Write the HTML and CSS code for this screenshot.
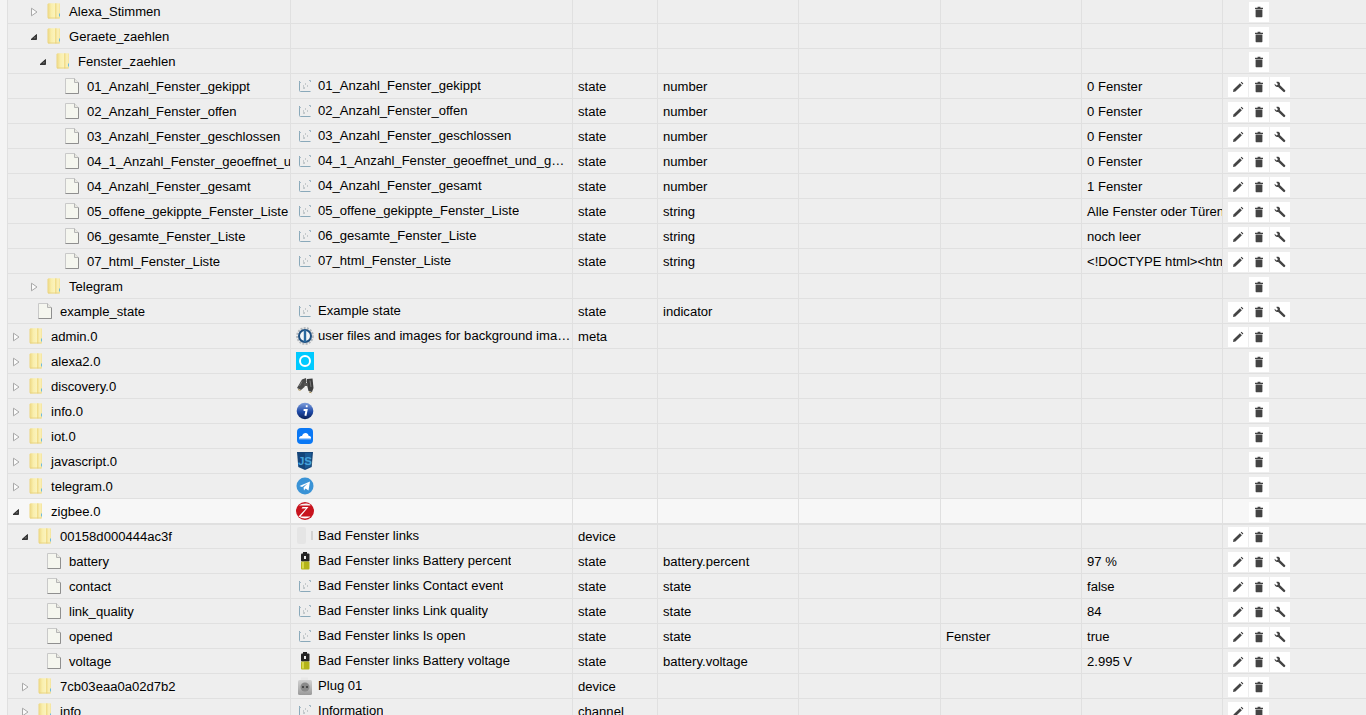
FILE: index.html
```html
<!DOCTYPE html>
<html lang="de">
<head>
<meta charset="utf-8">
<title>Objekte</title>
<link rel="stylesheet" href="styles.css">
</head>
<body>
<svg class="defs" aria-hidden="true">
<defs>
<linearGradient id="fg" x1="0" y1="0" x2="1" y2="0"><stop offset="0" stop-color="#ecd57e"/><stop offset=".5" stop-color="#f9eeac"/><stop offset="1" stop-color="#fbf3bd"/></linearGradient>
<linearGradient id="fh" x1="0" y1="0" x2="1" y2="0"><stop offset="0" stop-color="#efd981"/><stop offset=".6" stop-color="#fbf2bd"/><stop offset="1" stop-color="#f4e39a"/></linearGradient>
<linearGradient id="ig" x1="0" y1="0" x2="0" y2="1"><stop offset="0" stop-color="#7f9fdc"/><stop offset=".55" stop-color="#1f4aa8"/><stop offset="1" stop-color="#0b1f55"/></linearGradient>
<linearGradient id="pg" x1="0" y1="0" x2="0" y2="1"><stop offset="0" stop-color="#d2d2d2"/><stop offset="1" stop-color="#9a9a9a"/></linearGradient>
<symbol id="open" viewBox="0 0 8 10"><path d="M1.500 1.200 7 5 1.500 8.800Z" fill="#fbfbfb" stroke="#a8a8a8"/></symbol>
<symbol id="shut" viewBox="0 0 8 10"><path d="M1 7.500 6.500 2.500V7.500Z" fill="#222" stroke="#222" stroke-width=".8"/><path d="M3.200 6.400 5.600 4.300V6.400Z" fill="#777"/></symbol>
<symbol id="folder" viewBox="0 0 14 16"><path d="M.5 1.500C.5.800 1.500.300 3 .300H8V15.500H2.500C1.200 15.500.5 15 .5 14.200Z" fill="url(#fg)"/><path d="M8 .300H12.300C12.800 .300 13 .600 13 1V14.500C13 15.200 12.500 15.500 11.800 15.500H8Z" fill="url(#fh)"/><path d="M1 15H12.500" stroke="#e6ce78" stroke-width=".8"/><path d="M12 10.500h1v3h-1Z" fill="#6fbbdc"/></symbol>
<symbol id="file" viewBox="0 0 14 16"><path d="M.5.500H9.500L13.500 4.500V15.500H.5Z" fill="#f5f6ef" stroke="#c9c9c9"/><path d="M13.500 4.500V15.500H.5" fill="none" stroke="#8f8f8f"/><path d="M9.500.500V4.500H13.500" fill="#e8e8e0" stroke="#b5b5b5"/></symbol>
<symbol id="state" viewBox="0 0 12 12"><path d="M.5 1V10.500Q.5 11.500 1.500 11.500H11.500" fill="none" stroke="#8aa9ba"/><path d="M10 .500H11.500V2" fill="none" stroke="#9db5c2"/><path d="M.5 2.500h1.500" stroke="#a9bdc8"/><path d="M4 6h1M4 8h2M6 4h1M8 6h1" stroke="#9aa5aa"/></symbol>
<symbol id="pen" viewBox="0 0 12 12"><path d="M1 11 1.500 8.600 7.900 2.200 9.900 4.200 3.400 10.500Z" fill="#444"/><path d="M8.700 1.400 9.500.800 11.300 2.600 10.700 3.400Z" fill="#3b3b3b"/></symbol>
<symbol id="bin" viewBox="0 0 12 12"><path d="M2 1.800H4.600V.800H7.400V1.800H10V2.900H2Z" fill="#444"/><path d="M2.600 3.600H9.400V10.600Q9.400 11.200 8.800 11.200H3.200Q2.600 11.200 2.600 10.600Z" fill="#444"/></symbol>
<symbol id="wrench" viewBox="0 0 12 12"><path d="M.6 2.800 2.600 4.600 4 3.200 2.200 1.100C3.600.2 5.700.8 6 2.600 6.100 3.200 6 3.700 5.800 4.100L11.200 9.300C11.800 10 10.400 11.600 9.600 11L4.200 5.900C2.400 6.500.3 5 .6 2.800Z" fill="#444"/></symbol>
<symbol id="admin" viewBox="0 0 18 18"><circle cx="9" cy="9" r="7.800" fill="none" stroke="#b4b8bc" stroke-width="2.200" stroke-dasharray="2 1.200"/><circle cx="9" cy="9" r="6" fill="#f3f6f8" stroke="#1d4f80" stroke-width="2"/><path d="M9 3V15" stroke="#2a6aa0" stroke-width="2.400"/></symbol>
<symbol id="alexa" viewBox="0 0 18 18"><rect width="18" height="18" fill="#00caff"/><circle cx="9" cy="9" r="5" fill="none" stroke="#fff" stroke-width="2"/></symbol>
<symbol id="bino" viewBox="0 0 18 18"><path d="M1 11 6 2.500 10 1 10.500 4.500 8.500 10 5 13Z" fill="#4a4a4a"/><path d="M11 2 16.500 1.500 17.500 11 16 15 12.500 14 11 8Z" fill="#3e3e3e"/><path d="M8 6h4v3H8Z" fill="#555"/><path d="M2 12.500 4.500 13.500M13 15 15.500 15.800" stroke="#a88f55"/><path d="M6 4.500 3.500 9M14 3.500 15 10" stroke="#7a7a7a"/></symbol>
<symbol id="info" viewBox="0 0 18 18"><circle cx="9" cy="9" r="8.300" fill="url(#ig)"/><path d="M9.800 4.200h1.800M7.600 7.900h3l-1.200 5.800" stroke="#fff" stroke-width="2" fill="none"/></symbol>
<symbol id="iot" viewBox="0 0 18 18"><rect x="1" y="1" width="16" height="16" rx="4" fill="#0a78f5"/><path d="M3 11.500C3 9.500 4.800 9 6 9 6.500 7 8 6 9.500 6 11.500 6 12.500 7.500 12.500 8.800 14 8.800 15.500 10 15 11.500Z" fill="#fff"/><path d="M3 11.500h12v.8H3Z" fill="#bfdcff"/></symbol>
<symbol id="js" viewBox="0 0 18 18"><path d="M1 0H17L15.700 15 9 18 2.300 15Z" fill="#14457a"/><path d="M9 1V16.500L14.500 14.500 15.500 1Z" fill="#1c5a94"/><text x="9" y="13" text-anchor="middle" font-family="Liberation Sans, sans-serif" font-weight="700" font-size="11.500" fill="#45a3dc">JS</text></symbol>
<symbol id="tg" viewBox="0 0 18 18"><circle cx="9" cy="9" r="8.500" fill="#3a93d6"/><path d="M3.500 9 14 4.500 12.500 13.500 9.500 11.500 8 13.500 7.500 10.500 11.500 6.500 6 10Z" fill="#fff"/></symbol>
<symbol id="zig" viewBox="0 0 18 18"><circle cx="9" cy="9" r="9" fill="#c8141e"/><path d="M3 3.500C5 1.500 11 .800 14 2.500L14.500 3.500H5.500Z" fill="#f4f4f4"/><path d="M12.500 5 4.500 14.500H14.500C13 16.500 7 17.500 2.500 14.500L10 6.500H5.500L6.500 5Z" fill="#fff"/></symbol>
<symbol id="win" viewBox="0 0 18 18"><rect x="1" y="0" width="9" height="17" rx="2" fill="#e5e5e5"/><rect x="15" y="4" width="2" height="9" fill="#d2d2d2"/></symbol>
<symbol id="bat" viewBox="0 0 18 18"><rect x="7" y="0" width="4" height="2" fill="#222"/><rect x="5" y="1.500" width="8.500" height="8" rx="1" fill="#222"/><rect x="5" y="9.500" width="8.500" height="8" rx="1" fill="#b4b419"/><rect x="6" y="10" width="2" height="6.500" fill="#d8d84a"/><rect x="8" y="4" width="2" height="3" fill="#eee"/></symbol>
<symbol id="plug" viewBox="0 0 18 18"><path d="M5 .500H12V4H5Z" fill="#e8e8e8"/><rect x="2" y="3" width="14" height="15" rx="1.500" fill="url(#pg)"/><circle cx="9" cy="10" r="4.500" fill="#8a8a8a"/><circle cx="7" cy="10" r="1" fill="#333"/><circle cx="11" cy="10" r="1" fill="#333"/></symbol>
</defs>
</svg>
<main class="tree">
<div class="row"><div class="cell name d2"><svg class="tg"><use href="#open"/></svg><svg class="ic"><use href="#folder"/></svg><span>Alexa_Stimmen</span></div><div class="cell"></div><div class="cell"></div><div class="cell"></div><div class="cell"></div><div class="cell"></div><div class="cell"></div><div class="acts"><i class="btn gap"></i><b class="btn"><svg><use href="#bin"/></svg></b></div></div>
<div class="row"><div class="cell name d2"><svg class="tg"><use href="#shut"/></svg><svg class="ic"><use href="#folder"/></svg><span>Geraete_zaehlen</span></div><div class="cell"></div><div class="cell"></div><div class="cell"></div><div class="cell"></div><div class="cell"></div><div class="cell"></div><div class="acts"><i class="btn gap"></i><b class="btn"><svg><use href="#bin"/></svg></b></div></div>
<div class="row"><div class="cell name d3"><svg class="tg"><use href="#shut"/></svg><svg class="ic"><use href="#folder"/></svg><span>Fenster_zaehlen</span></div><div class="cell"></div><div class="cell"></div><div class="cell"></div><div class="cell"></div><div class="cell"></div><div class="cell"></div><div class="acts"><i class="btn gap"></i><b class="btn"><svg><use href="#bin"/></svg></b></div></div>
<div class="row"><div class="cell name d4"><i class="tg"></i><svg class="ic"><use href="#file"/></svg><span>01_Anzahl_Fenster_gekippt</span></div><div class="cell title"><svg class="ti sm"><use href="#state"/></svg><span>01_Anzahl_Fenster_gekippt</span></div><div class="cell">state</div><div class="cell">number</div><div class="cell"></div><div class="cell"></div><div class="cell">0 Fenster</div><div class="acts"><b class="btn"><svg><use href="#pen"/></svg></b><b class="btn"><svg><use href="#bin"/></svg></b><b class="btn"><svg><use href="#wrench"/></svg></b></div></div>
<div class="row"><div class="cell name d4"><i class="tg"></i><svg class="ic"><use href="#file"/></svg><span>02_Anzahl_Fenster_offen</span></div><div class="cell title"><svg class="ti sm"><use href="#state"/></svg><span>02_Anzahl_Fenster_offen</span></div><div class="cell">state</div><div class="cell">number</div><div class="cell"></div><div class="cell"></div><div class="cell">0 Fenster</div><div class="acts"><b class="btn"><svg><use href="#pen"/></svg></b><b class="btn"><svg><use href="#bin"/></svg></b><b class="btn"><svg><use href="#wrench"/></svg></b></div></div>
<div class="row"><div class="cell name d4"><i class="tg"></i><svg class="ic"><use href="#file"/></svg><span>03_Anzahl_Fenster_geschlossen</span></div><div class="cell title"><svg class="ti sm"><use href="#state"/></svg><span>03_Anzahl_Fenster_geschlossen</span></div><div class="cell">state</div><div class="cell">number</div><div class="cell"></div><div class="cell"></div><div class="cell">0 Fenster</div><div class="acts"><b class="btn"><svg><use href="#pen"/></svg></b><b class="btn"><svg><use href="#bin"/></svg></b><b class="btn"><svg><use href="#wrench"/></svg></b></div></div>
<div class="row"><div class="cell name d4"><i class="tg"></i><svg class="ic"><use href="#file"/></svg><span>04_1_Anzahl_Fenster_geoeffnet_und_geschlossen</span></div><div class="cell title"><svg class="ti sm"><use href="#state"/></svg><span>04_1_Anzahl_Fenster_geoeffnet_und_geschlossen</span></div><div class="cell">state</div><div class="cell">number</div><div class="cell"></div><div class="cell"></div><div class="cell">0 Fenster</div><div class="acts"><b class="btn"><svg><use href="#pen"/></svg></b><b class="btn"><svg><use href="#bin"/></svg></b><b class="btn"><svg><use href="#wrench"/></svg></b></div></div>
<div class="row"><div class="cell name d4"><i class="tg"></i><svg class="ic"><use href="#file"/></svg><span>04_Anzahl_Fenster_gesamt</span></div><div class="cell title"><svg class="ti sm"><use href="#state"/></svg><span>04_Anzahl_Fenster_gesamt</span></div><div class="cell">state</div><div class="cell">number</div><div class="cell"></div><div class="cell"></div><div class="cell">1 Fenster</div><div class="acts"><b class="btn"><svg><use href="#pen"/></svg></b><b class="btn"><svg><use href="#bin"/></svg></b><b class="btn"><svg><use href="#wrench"/></svg></b></div></div>
<div class="row"><div class="cell name d4"><i class="tg"></i><svg class="ic"><use href="#file"/></svg><span>05_offene_gekippte_Fenster_Liste</span></div><div class="cell title"><svg class="ti sm"><use href="#state"/></svg><span>05_offene_gekippte_Fenster_Liste</span></div><div class="cell">state</div><div class="cell">string</div><div class="cell"></div><div class="cell"></div><div class="cell">Alle Fenster oder Türen geschlossen</div><div class="acts"><b class="btn"><svg><use href="#pen"/></svg></b><b class="btn"><svg><use href="#bin"/></svg></b><b class="btn"><svg><use href="#wrench"/></svg></b></div></div>
<div class="row"><div class="cell name d4"><i class="tg"></i><svg class="ic"><use href="#file"/></svg><span>06_gesamte_Fenster_Liste</span></div><div class="cell title"><svg class="ti sm"><use href="#state"/></svg><span>06_gesamte_Fenster_Liste</span></div><div class="cell">state</div><div class="cell">string</div><div class="cell"></div><div class="cell"></div><div class="cell">noch leer</div><div class="acts"><b class="btn"><svg><use href="#pen"/></svg></b><b class="btn"><svg><use href="#bin"/></svg></b><b class="btn"><svg><use href="#wrench"/></svg></b></div></div>
<div class="row"><div class="cell name d4"><i class="tg"></i><svg class="ic"><use href="#file"/></svg><span>07_html_Fenster_Liste</span></div><div class="cell title"><svg class="ti sm"><use href="#state"/></svg><span>07_html_Fenster_Liste</span></div><div class="cell">state</div><div class="cell">string</div><div class="cell"></div><div class="cell"></div><div class="cell">&lt;!DOCTYPE html&gt;&lt;html&gt;&lt;head&gt;</div><div class="acts"><b class="btn"><svg><use href="#pen"/></svg></b><b class="btn"><svg><use href="#bin"/></svg></b><b class="btn"><svg><use href="#wrench"/></svg></b></div></div>
<div class="row"><div class="cell name d2"><svg class="tg"><use href="#open"/></svg><svg class="ic"><use href="#folder"/></svg><span>Telegram</span></div><div class="cell"></div><div class="cell"></div><div class="cell"></div><div class="cell"></div><div class="cell"></div><div class="cell"></div><div class="acts"><i class="btn gap"></i><b class="btn"><svg><use href="#bin"/></svg></b></div></div>
<div class="row"><div class="cell name d1"><i class="tg"></i><svg class="ic"><use href="#file"/></svg><span>example_state</span></div><div class="cell title"><svg class="ti sm"><use href="#state"/></svg><span>Example state</span></div><div class="cell">state</div><div class="cell">indicator</div><div class="cell"></div><div class="cell"></div><div class="cell"></div><div class="acts"><b class="btn"><svg><use href="#pen"/></svg></b><b class="btn"><svg><use href="#bin"/></svg></b><b class="btn"><svg><use href="#wrench"/></svg></b></div></div>
<div class="row"><div class="cell name d0"><svg class="tg"><use href="#open"/></svg><svg class="ic"><use href="#folder"/></svg><span>admin.0</span></div><div class="cell title"><svg class="ti"><use href="#admin"/></svg><span>user files and images for background image and so on</span></div><div class="cell">meta</div><div class="cell"></div><div class="cell"></div><div class="cell"></div><div class="cell"></div><div class="acts"><b class="btn"><svg><use href="#pen"/></svg></b><b class="btn"><svg><use href="#bin"/></svg></b></div></div>
<div class="row"><div class="cell name d0"><svg class="tg"><use href="#open"/></svg><svg class="ic"><use href="#folder"/></svg><span>alexa2.0</span></div><div class="cell title"><svg class="ti"><use href="#alexa"/></svg></div><div class="cell"></div><div class="cell"></div><div class="cell"></div><div class="cell"></div><div class="cell"></div><div class="acts"><i class="btn gap"></i><b class="btn"><svg><use href="#bin"/></svg></b></div></div>
<div class="row"><div class="cell name d0"><svg class="tg"><use href="#open"/></svg><svg class="ic"><use href="#folder"/></svg><span>discovery.0</span></div><div class="cell title"><svg class="ti"><use href="#bino"/></svg></div><div class="cell"></div><div class="cell"></div><div class="cell"></div><div class="cell"></div><div class="cell"></div><div class="acts"><i class="btn gap"></i><b class="btn"><svg><use href="#bin"/></svg></b></div></div>
<div class="row"><div class="cell name d0"><svg class="tg"><use href="#open"/></svg><svg class="ic"><use href="#folder"/></svg><span>info.0</span></div><div class="cell title"><svg class="ti"><use href="#info"/></svg></div><div class="cell"></div><div class="cell"></div><div class="cell"></div><div class="cell"></div><div class="cell"></div><div class="acts"><i class="btn gap"></i><b class="btn"><svg><use href="#bin"/></svg></b></div></div>
<div class="row"><div class="cell name d0"><svg class="tg"><use href="#open"/></svg><svg class="ic"><use href="#folder"/></svg><span>iot.0</span></div><div class="cell title"><svg class="ti"><use href="#iot"/></svg></div><div class="cell"></div><div class="cell"></div><div class="cell"></div><div class="cell"></div><div class="cell"></div><div class="acts"><i class="btn gap"></i><b class="btn"><svg><use href="#bin"/></svg></b></div></div>
<div class="row"><div class="cell name d0"><svg class="tg"><use href="#open"/></svg><svg class="ic"><use href="#folder"/></svg><span>javascript.0</span></div><div class="cell title"><svg class="ti"><use href="#js"/></svg></div><div class="cell"></div><div class="cell"></div><div class="cell"></div><div class="cell"></div><div class="cell"></div><div class="acts"><i class="btn gap"></i><b class="btn"><svg><use href="#bin"/></svg></b></div></div>
<div class="row"><div class="cell name d0"><svg class="tg"><use href="#open"/></svg><svg class="ic"><use href="#folder"/></svg><span>telegram.0</span></div><div class="cell title"><svg class="ti"><use href="#tg"/></svg></div><div class="cell"></div><div class="cell"></div><div class="cell"></div><div class="cell"></div><div class="cell"></div><div class="acts"><i class="btn gap"></i><b class="btn"><svg><use href="#bin"/></svg></b></div></div>
<div class="row sel"><div class="cell name d0"><svg class="tg"><use href="#shut"/></svg><svg class="ic"><use href="#folder"/></svg><span>zigbee.0</span></div><div class="cell title"><svg class="ti"><use href="#zig"/></svg></div><div class="cell"></div><div class="cell"></div><div class="cell"></div><div class="cell"></div><div class="cell"></div><div class="acts"><i class="btn gap"></i><b class="btn"><svg><use href="#bin"/></svg></b></div></div>
<div class="row"><div class="cell name d1"><svg class="tg"><use href="#shut"/></svg><svg class="ic"><use href="#folder"/></svg><span>00158d000444ac3f</span></div><div class="cell title"><svg class="ti"><use href="#win"/></svg><span>Bad Fenster links</span></div><div class="cell">device</div><div class="cell"></div><div class="cell"></div><div class="cell"></div><div class="cell"></div><div class="acts"><b class="btn"><svg><use href="#pen"/></svg></b><b class="btn"><svg><use href="#bin"/></svg></b></div></div>
<div class="row"><div class="cell name d2"><i class="tg"></i><svg class="ic"><use href="#file"/></svg><span>battery</span></div><div class="cell title"><svg class="ti"><use href="#bat"/></svg><span>Bad Fenster links Battery percent</span></div><div class="cell">state</div><div class="cell">battery.percent</div><div class="cell"></div><div class="cell"></div><div class="cell">97 %</div><div class="acts"><b class="btn"><svg><use href="#pen"/></svg></b><b class="btn"><svg><use href="#bin"/></svg></b><b class="btn"><svg><use href="#wrench"/></svg></b></div></div>
<div class="row"><div class="cell name d2"><i class="tg"></i><svg class="ic"><use href="#file"/></svg><span>contact</span></div><div class="cell title"><svg class="ti sm"><use href="#state"/></svg><span>Bad Fenster links Contact event</span></div><div class="cell">state</div><div class="cell">state</div><div class="cell"></div><div class="cell"></div><div class="cell">false</div><div class="acts"><b class="btn"><svg><use href="#pen"/></svg></b><b class="btn"><svg><use href="#bin"/></svg></b><b class="btn"><svg><use href="#wrench"/></svg></b></div></div>
<div class="row"><div class="cell name d2"><i class="tg"></i><svg class="ic"><use href="#file"/></svg><span>link_quality</span></div><div class="cell title"><svg class="ti sm"><use href="#state"/></svg><span>Bad Fenster links Link quality</span></div><div class="cell">state</div><div class="cell">state</div><div class="cell"></div><div class="cell"></div><div class="cell">84</div><div class="acts"><b class="btn"><svg><use href="#pen"/></svg></b><b class="btn"><svg><use href="#bin"/></svg></b><b class="btn"><svg><use href="#wrench"/></svg></b></div></div>
<div class="row"><div class="cell name d2"><i class="tg"></i><svg class="ic"><use href="#file"/></svg><span>opened</span></div><div class="cell title"><svg class="ti sm"><use href="#state"/></svg><span>Bad Fenster links Is open</span></div><div class="cell">state</div><div class="cell">state</div><div class="cell"></div><div class="cell">Fenster</div><div class="cell">true</div><div class="acts"><b class="btn"><svg><use href="#pen"/></svg></b><b class="btn"><svg><use href="#bin"/></svg></b><b class="btn"><svg><use href="#wrench"/></svg></b></div></div>
<div class="row"><div class="cell name d2"><i class="tg"></i><svg class="ic"><use href="#file"/></svg><span>voltage</span></div><div class="cell title"><svg class="ti"><use href="#bat"/></svg><span>Bad Fenster links Battery voltage</span></div><div class="cell">state</div><div class="cell">battery.voltage</div><div class="cell"></div><div class="cell"></div><div class="cell">2.995 V</div><div class="acts"><b class="btn"><svg><use href="#pen"/></svg></b><b class="btn"><svg><use href="#bin"/></svg></b><b class="btn"><svg><use href="#wrench"/></svg></b></div></div>
<div class="row"><div class="cell name d1"><svg class="tg"><use href="#open"/></svg><svg class="ic"><use href="#folder"/></svg><span>7cb03eaa0a02d7b2</span></div><div class="cell title"><svg class="ti"><use href="#plug"/></svg><span>Plug 01</span></div><div class="cell">device</div><div class="cell"></div><div class="cell"></div><div class="cell"></div><div class="cell"></div><div class="acts"><b class="btn"><svg><use href="#pen"/></svg></b><b class="btn"><svg><use href="#bin"/></svg></b></div></div>
<div class="row"><div class="cell name d1"><svg class="tg"><use href="#open"/></svg><svg class="ic"><use href="#folder"/></svg><span>info</span></div><div class="cell title"><svg class="ti sm"><use href="#state"/></svg><span>Information</span></div><div class="cell">channel</div><div class="cell"></div><div class="cell"></div><div class="cell"></div><div class="cell"></div><div class="acts"><b class="btn"><svg><use href="#pen"/></svg></b><b class="btn"><svg><use href="#bin"/></svg></b></div></div>
</main>
</body>
</html>
```
FILE: styles.css
```css
* { box-sizing: border-box; }
html, body { margin: 0; height: 715px; overflow: hidden; background: #f4f4f4; }
body { font: 13.08px/26px "Liberation Sans", Arial, sans-serif; color: #000; }
.defs { width: 0; height: 0; display: block; }
.tree { margin: -1px 0 0 7px; border-left: 1px solid #e0e0e0; }
.row {
  display: grid;
  grid-template-columns: 283px 282px 85px 141px 142px 141px 141px 143px;
  height: 25px;
  background: #eee;
  border-bottom: 1px solid #e0e0e0;
}
.row.sel { background: #f7f7f7; position: relative; box-shadow: 0 1px 0 #e0e0e0; }
.cell {
  border-right: 1px solid #e0e0e0;
  padding-left: 5px;
  min-width: 0;
  white-space: nowrap;
  overflow: hidden;
}
.name { display: flex; align-items: flex-start; }
.name span { margin-left: 8px; }
.d0 { padding-left: 4px; }
.d1 { padding-left: 13px; }
.d2 { padding-left: 22px; }
.d3 { padding-left: 31px; }
.d4 { padding-left: 40px; }
.tg { flex: none; width: 8px; height: 10px; margin: 8px 9px 0 0; }
.ic { flex: none; width: 14px; height: 16px; margin-top: 4px; }
.title { display: flex; align-items: flex-start; line-height: 24px; padding-right: 1px; }
.title span { margin-left: 4px; overflow: hidden; text-overflow: ellipsis; }
.ti { flex: none; width: 18px; height: 18px; margin-top: 3px; }
.ti.sm { padding: 3px; }
.acts { display: flex; gap: 1px; padding: 3px 0 0 5px; }
.btn { display: flex; align-items: center; justify-content: center; width: 20px; height: 20px; background: #fff; }
.btn.gap { background: none; }
.btn svg { width: 12px; height: 12px; }
```
